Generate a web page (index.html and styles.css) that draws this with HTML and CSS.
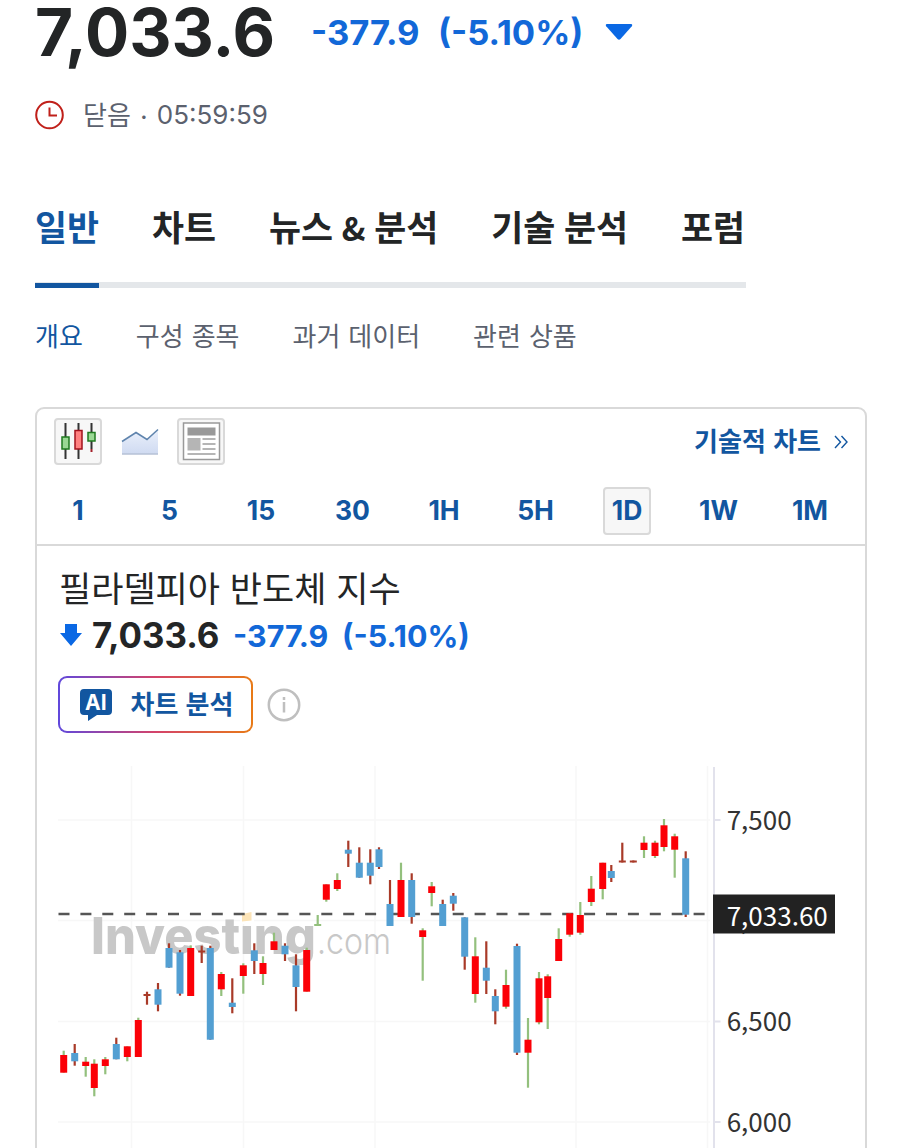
FILE: index.html
```
<!DOCTYPE html>
<html lang="ko">
<head>
    <meta charset="utf-8">
    <title>필라델피아 반도체 지수</title>
    <meta name="viewport" content="width=device-width, initial-scale=1">
    <link rel="stylesheet" href="styles.css">
</head>
<body>

<header class="quote">
    <div class="quote-price">
        <span class="last">7,033.6</span>
        <span class="change">-377.9</span>
        <span class="percent">(-5.10%)</span>
        <svg class="caret" width="28" height="18" viewBox="0 0 28 18"><path d="M2 1h24q2 .5 .8 2.2L15.500 16q-1.500 1.600-3 0L1.200 3.200Q0 1.500 2 1z" fill="#0a68e4"/></svg>
    </div>
    <div class="quote-status">
        <svg width="30" height="30" viewBox="0 0 30 30" fill="none" stroke="#c0201a" stroke-width="2"><circle cx="14.500" cy="15" r="13.300"/><path d="M14.500 7.500v8h7.500"/></svg>
        <span class="status-name">닫음</span>
        <span class="status-dot">·</span>
        <span class="status-time">05:59:59</span>
    </div>
</header>

<nav class="tabs">
    <a class="tab active">일반</a>
    <a class="tab">차트</a>
    <a class="tab">뉴스 <span class="amp">&amp;</span> 분석</a>
    <a class="tab">기술 분석</a>
    <a class="tab">포럼</a>
</nav>

<nav class="subtabs">
    <a class="active">개요</a>
    <a>구성 종목</a>
    <a>과거 데이터</a>
    <a>관련 상품</a>
</nav>

<section class="card">
    <div class="toolbar">
        <div class="tool boxed">
            <svg width="44" height="43" viewBox="0 0 44 43">
                <path d="M9.500 3v36M22.500 3v36M35.500 3v26" stroke="#333" stroke-width="2"/>
                <path d="M35.500 29v3" stroke="#a3202a" stroke-width="2"/>
                <rect x="6" y="17" width="7" height="12" fill="#9ad894" stroke="#1f7a1f" stroke-width="1.500"/>
                <rect x="19" y="10.500" width="7" height="18.500" fill="#ff8080" stroke="#a3121c" stroke-width="1.500"/>
                <rect x="32" y="12.500" width="7" height="8.500" fill="#9ad894" stroke="#1f7a1f" stroke-width="1.500"/>
            </svg>
        </div>
        <div class="tool">
            <svg width="38" height="30" viewBox="0 0 38 30">
                <defs><linearGradient id="area" x1="0" y1="0" x2="0" y2="1"><stop offset="0" stop-color="#eaf0fb"/><stop offset="1" stop-color="#cfdaf1"/></linearGradient></defs>
                <path d="M1 14.500L15 5.500l11 7L37 2.500v25H1z" fill="url(#area)"/>
                <path d="M1 14.500L15 5.500l11 7L37 2.500" fill="none" stroke="#5f84ad" stroke-width="1.500"/>
                <path d="M1 27h36" stroke="#a9b4c8"/>
            </svg>
        </div>
        <div class="tool boxed">
            <svg width="44" height="43" viewBox="0 0 44 43" fill="#b5b5b5">
                <rect x="4.500" y="3" width="36" height="36.500" fill="#fff" stroke="#999" stroke-width="1.500"/>
                <rect x="8.500" y="7.500" width="28" height="8" fill="#999"/>
                <rect x="8.500" y="18" width="13" height="12.500"/>
                <path d="M23.500 18h13v2h-13zM23.500 23h13v2h-13zM23.500 28h13v2h-13zM8.500 33h28v2h-28z"/>
            </svg>
        </div>
        <a class="tech-link">
            <span>기술적 차트</span>
            <svg width="14" height="14" viewBox="0 0 14 14" fill="none" stroke="#1256a0" stroke-width="1.400"><path d="M1 1l5.500 6L1 13M7.500 1l5.500 6-5.500 6"/></svg>
        </a>
    </div>

    <div class="intervals">
        <span>1</span>
        <span>5</span>
        <span>15</span>
        <span>30</span>
        <span>1H</span>
        <span>5H</span>
        <span class="selected">1D</span>
        <span>1W</span>
        <span>1M</span>
    </div>

    <div class="summary">
        <h2>필라델피아 반도체 지수</h2>
        <div class="summary-price">
            <svg width="22" height="22" viewBox="0 0 22 22"><path d="M5 0h12v9h5L11 22 0 9h5z" fill="#0a68e4"/></svg>
            <span class="last">7,033.6</span>
            <span class="change">-377.9</span>
            <span class="percent">(-5.10%)</span>
        </div>
        <div class="actions">
            <button class="ai-button">
                <svg width="32" height="32" viewBox="0 0 32 32"><path d="M4 0h24q4 0 4 4v18q0 4-4 4H17l-9 6V26H4q-4 0-4-4V4q0-4 4-4z" fill="#1256a0"/><text class="ai-text" x="5" y="21">AI</text></svg>
                <span>차트 분석</span>
            </button>
            <svg width="34" height="34" viewBox="0 0 34 34" fill="none" stroke="#bfbfbf" stroke-width="2.500"><circle cx="17" cy="17" r="15.200"/><path d="M17 14v10.500M17 9v3"/></svg>
        </div>
    </div>

    <svg id="chart" width="828" height="382" viewBox="37 766 828 382">
        <g class="grid">
            <path d="M131.500 766v382M243.500 766v382M375 766v382M576 766v382M707.500 766v382"/>
            <path d="M58 820h652M58 920.500h652M58 1021.500h652M58 1122h652"/>
        </g>
        <g class="watermark">
            <text class="wm-name" x="91" y="954" textLength="225" lengthAdjust="spacingAndGlyphs">Investing</text>
            <text class="wm-com" x="317" y="954" textLength="74" lengthAdjust="spacingAndGlyphs">.com</text>
            <path class="wm-gap" d="M240 911h14v13h-14z"/>
            <path class="wm-dot" d="M242 914l9.500-2v8.500l-9.500 1z"/>
        </g>
        <path class="last-line" d="M58.500 914H705"/>
        <g id="candles"></g>
        <path class="axis" d="M714 767v381M714 820h6.500M714 1021.500h6.500M714 1122h6.500"/>
        <g class="labels">
            <text x="726.700" y="829.500">7,500</text>
            <text x="726.700" y="929.500">7,000</text>
            <text x="726.700" y="1030.500">6,500</text>
            <text x="726.700" y="1131.500">6,000</text>
        </g>
        <rect class="tag" x="713" y="894.500" width="122" height="39"/>
        <text class="tag-text" x="726.700" y="926">7,033.60</text>
    </svg>
</section>

<script src="chart.js"></script>
</body>
</html>
```
FILE: styles.css
```
* {
    box-sizing: border-box;
}

body {
    margin: 0;
    height: 1148px;
    overflow: hidden;
    background: #fff;
    color: #232526;
    font-family: "Noto Sans CJK KR", sans-serif;
}

svg {
    display: block;
    flex-shrink: 0;
}

/* quote header */
.quote {
    padding-left: 35px;
}

.quote-price {
    display: flex;
    align-items: center;
    height: 64px;
    font-family: Inter, sans-serif;
    font-weight: 700;
    white-space: nowrap;
}

.quote-price .last {
    width: 276px;
    font-size: 65.6px;
    line-height: 64px;
}

.change, .percent {
    color: #1268d8;
    font-weight: 700;
}

.quote-price .change,
.quote-price .percent {
    font-size: 34.6px;
}

.quote-price .change {
    width: 127px;
}

.quote-price .percent {
    width: 167px;
}

.quote-status {
    display: flex;
    align-items: center;
    height: 102px;
    color: #5b616e;
    font-size: 26px;
}

.status-name {
    margin-left: 18px;
    padding-bottom: 3px;
}

.status-dot {
    width: 26px;
    text-align: center;
}

.status-time {
    padding-bottom: 1px;
    font-family: Inter, sans-serif;
    font-size: 26px;
}

/* navigation */
.tabs {
    display: flex;
    gap: 53px;
    width: 711px;
    height: 86px;
    margin: 36px 0 0 35px;
    border-bottom: 6px solid #e4e7ea;
    white-space: nowrap;
}

.tab {
    height: 86px;
    font-size: 34.8px;
    font-weight: 700;
    line-height: 48px;
    word-spacing: -1px;
}

.amp {
    font-size: 32px;
}

.tab.active {
    color: #1256a0;
    border-bottom: 5px solid #1256a0;
}

.subtabs {
    display: flex;
    gap: 53px;
    margin: 27px 0 0 35px;
    color: #5b616e;
    font-size: 26px;
    line-height: 40px;
    word-spacing: 0.7px;
}

.subtabs .active {
    color: #1256a0;
}

/* chart card */
.card {
    width: 832px;
    height: 780px;
    margin: 52px 0 0 35px;
    border: 2px solid #d9d9d9;
    border-radius: 9px;
}

.toolbar {
    display: flex;
    align-items: center;
    gap: 13.5px;
    padding: 9px 17px 0;
}

.tool {
    display: flex;
    align-items: center;
    justify-content: center;
    width: 48px;
    height: 47px;
}

.boxed, .selected {
    background: #f7f7f7;
    border: 2px solid #d9d9d9;
    border-radius: 4px;
}

.tech-link {
    display: flex;
    align-items: center;
    gap: 13px;
    margin-left: auto;
    color: #1256a0;
    font-size: 26px;
    font-weight: 700;
}

.tech-link span {
    padding-bottom: 4px;
}

.intervals {
    display: flex;
    justify-content: space-between;
    padding: 22px 31px 9px 17px;
    border-bottom: 2px solid #d9d9d9;
}

.intervals span {
    display: flex;
    align-items: center;
    justify-content: center;
    width: 48px;
    height: 48px;
    padding-bottom: 2px;
    color: #1256a0;
    font-family: Inter, sans-serif;
    font-size: 26.5px;
    font-weight: 700;
}

.summary {
    height: 220px;
    padding: 16px 0 0 21px;
}

.summary h2 {
    margin: 0 0 0 1px;
    font-size: 35px;
    font-weight: 400;
    line-height: 50px;
}

.summary-price {
    display: flex;
    align-items: center;
    height: 46px;
    margin-left: 2px;
    font-family: Inter, sans-serif;
    font-weight: 700;
}

.summary-price .last {
    width: 141px;
    margin-left: 10px;
    font-size: 34.8px;
}

.summary-price .change,
.summary-price .percent {
    padding-top: 1px;
    font-size: 30.4px;
}

.summary-price .change {
    width: 109px;
}

.actions {
    display: flex;
    align-items: center;
    gap: 14px;
    margin-top: 18px;
}

.ai-button {
    display: flex;
    align-items: center;
    gap: 19px;
    width: 195px;
    height: 57px;
    padding: 0 0 0 19.5px;
    border: 2.5px solid transparent;
    border-radius: 9px;
    background: linear-gradient(#fff, #fff) padding-box, linear-gradient(90deg, #6048dc, #d4436a 50%, #e87a16) border-box;
    color: #1256a0;
    font-family: "Noto Sans CJK KR", sans-serif;
    font-size: 26px;
    font-weight: 700;
}

.ai-button span {
    padding-bottom: 4px;
}

.ai-text {
    fill: #fff;
    font: 700 21px Inter, sans-serif;
}

/* chart */
.grid {
    stroke: #f7f7f7;
    stroke-width: 1.5;
}

.watermark {
    fill: #c8c8c8;
}

.wm-name {
    font: 800 51px Inter, sans-serif;
}

.wm-com {
    font: 300 37px Inter, sans-serif;
}

.wm-gap {
    fill: #fff;
}

.wm-dot {
    fill: #fce4b8;
}

.last-line {
    stroke: #555;
    stroke-width: 2.6;
    stroke-dasharray: 11 10.9;
}

.axis {
    fill: none;
    stroke: #e2e2ec;
    stroke-width: 2;
}

.labels, .tag-text {
    fill: #333;
    font-size: 26px;
}

.tag {
    fill: #222;
}

.tag-text {
    fill: #fff;
}
```
FILE: chart.js
```
// [x, high, body top, body bottom, low, type]
// r - up, b - down, d / g - flat with dark or green wick
const candles = [
    [63.7, 1050.7, 1055, 1072.7, 1072.7, 'r'],
    [74.7, 1044, 1053, 1061.3, 1065.7, 'b'],
    [85.7, 1057, 1061.7, 1066, 1076.7, 'r'],
    [94.3, 1059.3, 1063.7, 1088, 1096.3, 'r'],
    [105.3, 1057, 1059.3, 1066, 1074.3, 'r'],
    [116.3, 1037.7, 1044, 1059.3, 1059.3, 'b'],
    [127.3, 1046.3, 1046.3, 1057, 1061.3, 'r'],
    [138.3, 1017.7, 1020, 1057, 1057, 'r'],
    [147, 991.7, 994, 996, 1004.7, 'd'],
    [158, 983, 989.3, 1004.7, 1011.3, 'b'],
    [169, 943.3, 948, 967.7, 967.7, 'b'],
    [180, 950, 952.3, 993.7, 995.7, 'b'],
    [190.7, 945.3, 948, 996, 996, 'r'],
    [201.7, 945.7, 950.5, 952.5, 963, 'd'],
    [210.3, 945.7, 948, 1039.7, 1039.7, 'b'],
    [221.3, 972, 974, 989.3, 996, 'r'],
    [232.3, 978.3, 1002.7, 1007, 1013.3, 'b'],
    [243.3, 963.3, 965.3, 976, 993.7, 'r'],
    [254.3, 943.3, 950.3, 961, 974, 'b'],
    [263, 956.3, 963, 974, 985, 'r'],
    [274, 932.7, 941.3, 950, 950, 'r'],
    [285, 943.3, 945.7, 954.3, 961, 'b'],
    [296, 954.3, 965.3, 987, 1011.3, 'b'],
    [306.7, 947.7, 950, 991.7, 991.7, 'r'],
    [317.7, 915, 924, 926, 926, 'g'],
    [326.3, 884.3, 884.3, 899.7, 901.7, 'r'],
    [337.3, 873.3, 880, 889, 891, 'r'],
    [348.3, 840.7, 849.7, 853.7, 867, 'b'],
    [359.3, 847.3, 862.7, 877.7, 877.7, 'b'],
    [370.3, 849.3, 862.7, 875.7, 884.3, 'b'],
    [379, 847.3, 849.3, 867, 869, 'b'],
    [390, 880, 904, 926, 926, 'b'],
    [401, 862.7, 880, 917, 917, 'r'],
    [411.7, 873.3, 880, 917, 923.7, 'b'],
    [422.7, 928.3, 930.3, 937, 980.7, 'r'],
    [431.7, 882, 886.3, 893, 906.3, 'r'],
    [442.7, 899.7, 904, 926, 926, 'b'],
    [453.3, 893, 895.7, 903.7, 910.7, 'b'],
    [464.7, 917.3, 917.3, 956.7, 969.7, 'b'],
    [475.3, 937.3, 956.3, 994, 1002.7, 'r'],
    [486.3, 941.3, 967.7, 980.7, 994, 'b'],
    [495.3, 989.3, 996, 1011.3, 1024.3, 'b'],
    [506, 969.7, 985, 1006.7, 1008.7, 'r'],
    [517, 943.7, 946, 1052.7, 1055, 'b'],
    [528, 1018, 1039.7, 1052.7, 1087.7, 'r'],
    [539, 972, 978.3, 1022.3, 1024.3, 'r'],
    [547.7, 974.3, 976.3, 998, 1029, 'r'],
    [558.7, 928.3, 939, 961, 961, 'r'],
    [569.7, 913.3, 913.3, 934.7, 936.7, 'r'],
    [580.3, 902, 915, 932.7, 934.7, 'r'],
    [591.3, 876, 888.7, 902, 906, 'r'],
    [602.7, 862.7, 862.7, 889, 899.3, 'r'],
    [611.3, 865, 871, 878, 882, 'b'],
    [622.3, 842.7, 860.5, 862.5, 862.5, 'd'],
    [633.3, 860.5, 860.5, 862.5, 862.5, 'd'],
    [644, 836.3, 842.7, 850, 858, 'r'],
    [655, 840.7, 842.7, 856, 858, 'r'],
    [664, 819, 825.3, 847, 851.3, 'r'],
    [674.7, 833.7, 836.3, 849.7, 877.7, 'r'],
    [685.7, 851.3, 858.3, 914.7, 917, 'b']
];

const body = { r: '#fb0007', b: '#539fd2', d: '#a93a28', g: '#93c07d' };
const wick = { r: '#93c07d', b: '#a93a28', d: '#a93a28', g: '#93c07d' };

function rect(x, y, w, h, color) {
    return `<rect x="${x}" y="${y}" width="${w}" height="${h}" fill="${color}"/>`;
}

document.getElementById('candles').innerHTML = candles.map(([x, high, top, bottom, low, type]) =>
    rect(x - 1.1, high, 2.2, low - high, wick[type]) +
    rect(x - 3.5, top, 7, bottom - top, body[type])
).join('');
```
